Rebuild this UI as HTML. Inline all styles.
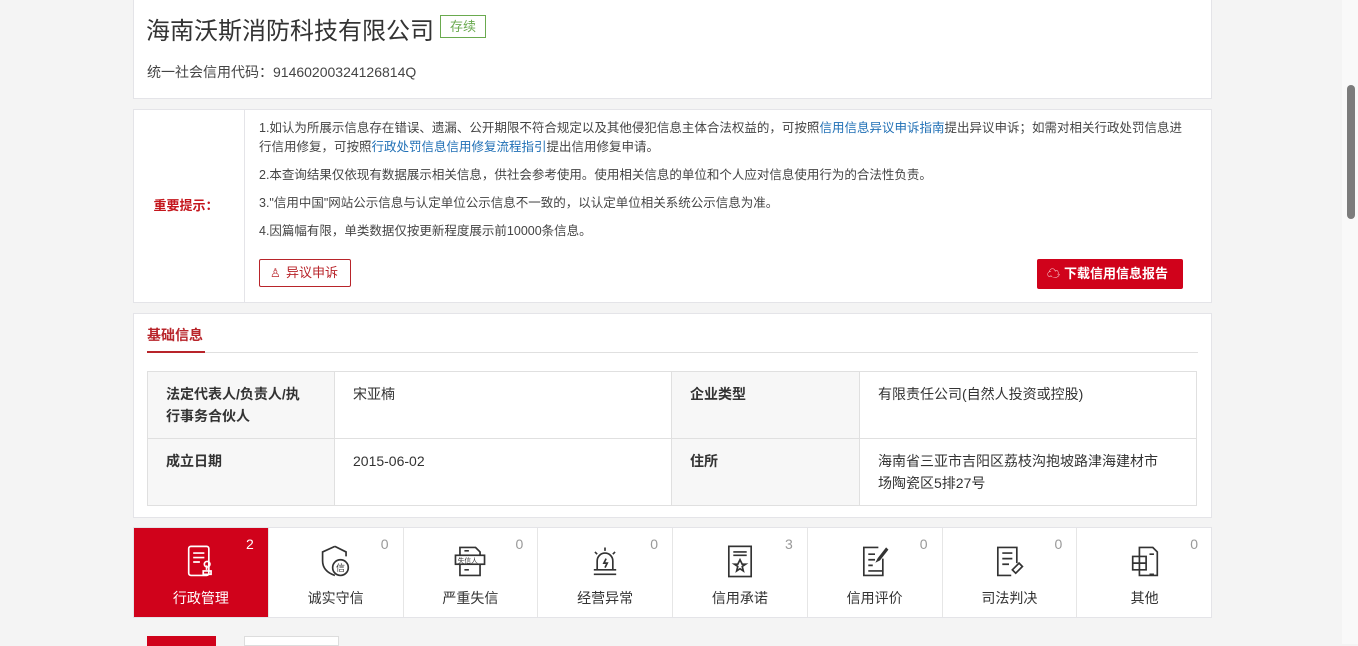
<!DOCTYPE html>
<html><head><meta charset="utf-8"><style>
*{box-sizing:border-box;margin:0;padding:0}
body{width:1358px;height:644px;overflow:hidden;background:#f4f4f4;font-family:"Liberation Sans","Noto Sans CJK SC",sans-serif;color:#333;position:relative}
.card{position:absolute;left:133px;width:1079px;background:#fff;border:1px solid #e4e4e8}
.sb{position:absolute;left:1342px;top:0;width:16px;height:644px;background:#f9f9f9}
.thumb{position:absolute;left:1347px;top:85px;width:8px;height:134px;background:#7c7c7c;border-radius:4px}
a{color:#1f6fb5;text-decoration:none}
.np p{font-size:12.5px;line-height:19px;color:#444}
table{border-collapse:collapse;position:absolute;left:13px;top:57px;width:1050px;table-layout:fixed}
td{border:1px solid #e0e0e0;font-size:14px;vertical-align:top;padding:11px 18px;line-height:22px;height:66px;background:rgba(255,255,255,.6)}
td.l{font-weight:bold;background:#f7f7f7;padding-right:26px}
.tab{position:absolute;top:0;height:89px;width:134.75px;border-right:1px solid #e6e6e6;text-align:center;font-size:14px}
.tab .n{position:absolute;right:14px;top:8px;font-size:14px;color:#999}
.tab .t{position:absolute;left:0;right:0;top:60px}
.tab svg{position:absolute;left:50%;top:15px;margin-left:-19px}
</style></head><body>
<div class="card" style="top:-1px;height:100px">
 <div style="position:absolute;left:12px;top:11px;font-size:24px;color:#333">海南沃斯消防科技有限公司</div>
 <div style="position:absolute;left:306px;top:15px;width:46px;height:23px;border:1px solid #6aaa4f;color:#6aaa4f;font-size:13px;text-align:center;line-height:21px">存续</div>
 <div style="position:absolute;left:13px;top:62px;font-size:14px;color:#444">统一社会信用代码：91460200324126814Q</div>
</div>
<div class="card" style="top:109px;height:194px">
 <div style="position:absolute;left:0;top:0;width:111px;height:192px;border-right:1px solid #e4e4e8;color:#c4161c;font-weight:bold;font-size:13px;text-align:center;line-height:192px;padding-right:6px">重要提示：</div>
 <div class="np" style="position:absolute;left:125px;top:9px;width:930px">
  <p>1.如认为所展示信息存在错误、遗漏、公开期限不符合规定以及其他侵犯信息主体合法权益的，可按照<a>信用信息异议申诉指南</a>提出异议申诉；如需对相关行政处罚信息进行信用修复，可按照<a>行政处罚信息信用修复流程指引</a>提出信用修复申请。</p>
  <p style="margin-top:9px">2.本查询结果仅依现有数据展示相关信息，供社会参考使用。使用相关信息的单位和个人应对信息使用行为的合法性负责。</p>
  <p style="margin-top:9px">3."信用中国"网站公示信息与认定单位公示信息不一致的，以认定单位相关系统公示信息为准。</p>
  <p style="margin-top:9px">4.因篇幅有限，单类数据仅按更新程度展示前10000条信息。</p>
 </div>
 <div style="position:absolute;left:125px;top:149px;width:92px;height:28px;border:1px solid #b8242a;border-radius:2px;color:#b8242a;font-size:13px;line-height:26px;padding-left:26px">异议申诉<span style="position:absolute;left:10px;top:0;font-size:12px">♙</span></div>
 <div style="position:absolute;left:903px;top:149px;width:146px;height:30px;background:#d0021b;border-radius:2px;color:#fff;font-size:13px;font-weight:bold;line-height:30px;padding-left:27px">下载信用信息报告<span style="position:absolute;left:10px;top:0;font-weight:normal">☁</span></div>
</div>
<div class="card" style="top:313px;height:205px">
 <div style="position:absolute;left:13px;top:11px;color:#b8242a;font-weight:bold;font-size:14px">基础信息</div>
 <div style="position:absolute;left:13px;right:13px;top:38px;border-top:1px solid #e0e0e0"></div>
 <div style="position:absolute;left:13px;width:58px;top:37px;border-top:2px solid #b8242a"></div>
 <table>
  <colgroup><col style="width:187px"><col style="width:337px"><col style="width:188px"><col></colgroup>
  <tr><td class="l">法定代表人/负责人/执行事务合伙人</td><td>宋亚楠</td><td class="l">企业类型</td><td>有限责任公司(自然人投资或控股)</td></tr>
  <tr><td class="l">成立日期</td><td>2015-06-02</td><td class="l">住所</td><td style="padding-right:26px">海南省三亚市吉阳区荔枝沟抱坡路津海建材市场陶瓷区5排27号</td></tr>
 </table>
</div>
<div class="card" style="top:527px;height:91px">
 <div class="tab" style="left:0;background:#d0021b;color:#fff"><span class="n" style="color:#fff">2</span><svg width="38" height="38" viewBox="0 0 34 34" fill="none" stroke="#fff" stroke-width="1.5"><rect x="6" y="3" width="18" height="26" rx="2"/><path d="M10 9h10M10 13h10M10 17h6M22 20v4M19 28h7v-3h-7z"/><circle cx="22.5" cy="19" r="2.5"/></svg><span class="t">行政管理</span></div>
 <div class="tab" style="left:134.75px"><span class="n">0</span><svg width="38" height="38" viewBox="0 0 34 34" fill="none" stroke="#333" stroke-width="1.5"><path d="M16 3l-11 5v8c0 7 5 11 11 13M16 3l10 5v4"/><circle cx="21" cy="22" r="7"/><text x="17" y="25" font-size="8" fill="#333" stroke="none">信</text></svg><span class="t">诚实守信</span></div>
 <div class="tab" style="left:269.5px"><span class="n">0</span><svg width="38" height="38" viewBox="0 0 34 34" fill="none" stroke="#333" stroke-width="1.5"><path d="M8 11V4h14l4 4v3M8 19v10h18V19M12 7h4M12 24h4"/><rect x="4" y="11" width="26" height="8"/><text x="6" y="18" font-size="6" fill="#333" stroke="none">失信人</text></svg><span class="t">严重失信</span></div>
 <div class="tab" style="left:404.25px"><span class="n">0</span><svg width="38" height="38" viewBox="0 0 34 34" fill="none" stroke="#333" stroke-width="1.5"><path d="M10 24V16a7 7 0 0 1 14 0v8M7 24h20M7 28h20M17 4v3M8 8l2 2M26 8l-2 2M18 14l-2 4h3l-2 4"/></svg><span class="t">经营异常</span></div>
 <div class="tab" style="left:539px"><span class="n">3</span><svg width="38" height="38" viewBox="0 0 34 34" fill="none" stroke="#333" stroke-width="1.5"><rect x="7" y="3" width="20" height="27"/><path d="M11 8h12M11 11h12M17 15l2 4h3l-3 2 1 4-3-2-3 2 1-4-3-2h3z"/></svg><span class="t">信用承诺</span></div>
 <div class="tab" style="left:673.75px"><span class="n">0</span><svg width="38" height="38" viewBox="0 0 34 34" fill="none" stroke="#333" stroke-width="1.5"><path d="M24 14v15H7V4h13M11 10h6M11 15h6M11 20h4M11 25h13M28 6l-7 9-2 1 1-2 7-9z"/></svg><span class="t">信用评价</span></div>
 <div class="tab" style="left:808.5px"><span class="n">0</span><svg width="38" height="38" viewBox="0 0 34 34" fill="none" stroke="#333" stroke-width="1.5"><path d="M24 18V4H7v25h12M11 9h9M11 14h9M11 19h6M20 24l6-6 3 3-6 6z"/></svg><span class="t">司法判决</span></div>
 <div class="tab" style="left:943.25px;border-right:none"><span class="n">0</span><svg width="38" height="38" viewBox="0 0 34 34" fill="none" stroke="#333" stroke-width="1.5"><path d="M12 4h12l4 4v21H12zM6 12h12v12H6zM6 18h12M12 12v12M21 10h4M21 28h4"/></svg><span class="t">其他</span></div>
</div>
<div style="position:absolute;left:147px;top:636px;width:69px;height:10px;background:#d0021b"></div>
<div style="position:absolute;left:244px;top:636px;width:95px;height:10px;background:#fff;border:1px solid #ddd"></div>
<div class="sb"></div><div class="thumb"></div>
</body></html>
